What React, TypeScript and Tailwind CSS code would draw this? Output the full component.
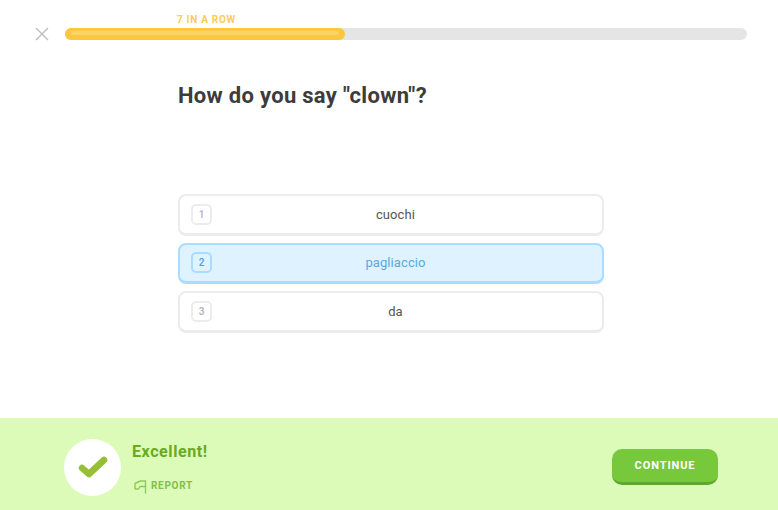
import React from 'react';

const choices = [
  { key: 1, label: 'cuochi' },
  { key: 2, label: 'pagliaccio', selected: true },
  { key: 3, label: 'da' },
];

export default function App() {
  return (
    <div className="flex h-[510px] w-[778px] flex-col overflow-hidden bg-white font-['Roboto',sans-serif]">
      {/* Header */}
      <div className="flex h-[28px] shrink-0" />
      <div className="flex h-[12px] shrink-0 items-center gap-[16px] pl-[35px] pr-[31px]">
        <svg width="14" height="14" viewBox="0 0 14 14" className="shrink-0" fill="none" stroke="#bdbdbd" strokeWidth="1.4">
          <path d="M1 1l12 12M13 1L1 13" />
        </svg>
        <div className="relative h-[12px] flex-1 rounded-full bg-[#e5e5e5]">
          <div className="absolute bottom-[14px] left-[112px] text-[10px] font-bold leading-[12px] tracking-[0.7px] whitespace-nowrap text-[#fbcb55]">
            7 IN A ROW
          </div>
          <div className="h-full w-[280px] rounded-full bg-[#fbc740] px-[6px] pt-[3px]">
            <div className="h-[4px] rounded-full bg-[#fbd468]" />
          </div>
        </div>
      </div>

      {/* Question */}
      <div className="flex flex-1 flex-col pl-[178px]">
        <h1 className="mt-[41px] text-[22px] leading-[30px] font-bold tracking-[0.3px] text-[#3c3c3c]">
          How do you say "clown"?
        </h1>
        <div className="mt-[83px] flex w-[426px] flex-col gap-[7px]">
          {choices.map(c => (
            <div
              key={c.key}
              className={`flex h-[41.5px] items-center rounded-[8px] border-2 border-b-[3px] pr-[3px] pl-[11px] ${
                c.selected ? 'border-[#a8ddff] bg-[#def2ff]' : 'border-[#ececec] bg-white'
              }`}
            >
              <span
                className={`flex h-[21px] w-[21px] shrink-0 items-center justify-center rounded-[5px] border-2 text-[10px] font-medium ${
                  c.selected ? 'border-[#a8ddff] font-bold text-[#4b9fdc]' : 'border-[#ececec] text-[#afafaf]'
                }`}
              >
                {c.key}
              </span>
              <span
                className={`flex-1 pr-[20px] text-center text-[13px] tracking-[0.1px] ${
                  c.selected ? 'text-[#5aa9e0]' : 'text-[#555555]'
                }`}
              >
                {c.label}
              </span>
            </div>
          ))}
        </div>
      </div>

      {/* Footer */}
      <div className="flex h-[92px] shrink-0 items-center justify-between bg-[#ddfbb8] pt-[6px] pr-[60px] pl-[64px]">
        <div className="flex items-center gap-[11px]">
          <div className="flex h-[57px] w-[57px] items-center justify-center rounded-full bg-white">
            <svg width="30" height="24" viewBox="0 0 30 24" fill="none" stroke="#96bf36" strokeWidth="6.5" strokeLinecap="round" strokeLinejoin="round">
              <path d="M4 13l7 6L26 5" />
            </svg>
          </div>
          <div className="flex flex-col">
            <div className="text-[16px] leading-[22px] font-bold tracking-[0.6px] text-[#68aa22]">Excellent!</div>
            <div className="mt-[16px] flex items-center gap-[4px] pl-[2px]">
              <svg width="13" height="15" viewBox="0 0 13 15" fill="none" stroke="#8ccb55" strokeWidth="1.4" strokeLinejoin="round" strokeLinecap="round">
                <path d="M11.5 14V2H6.5L1 4.5V10h3.5L6 7.5h5.5" />
              </svg>
              <span className="text-[10px] leading-[14px] font-bold tracking-[0.7px] text-[#7fbf4a]">REPORT</span>
            </div>
          </div>
        </div>
        <button
          type="button"
          className="flex h-[36px] w-[106px] items-center justify-center rounded-[10px] border-b-[3px] border-[#5fa82e] bg-[#78c83c] pt-[2px] text-[11px] font-bold tracking-[0.9px] text-white"
        >
          CONTINUE
        </button>
      </div>
    </div>
  );
}
